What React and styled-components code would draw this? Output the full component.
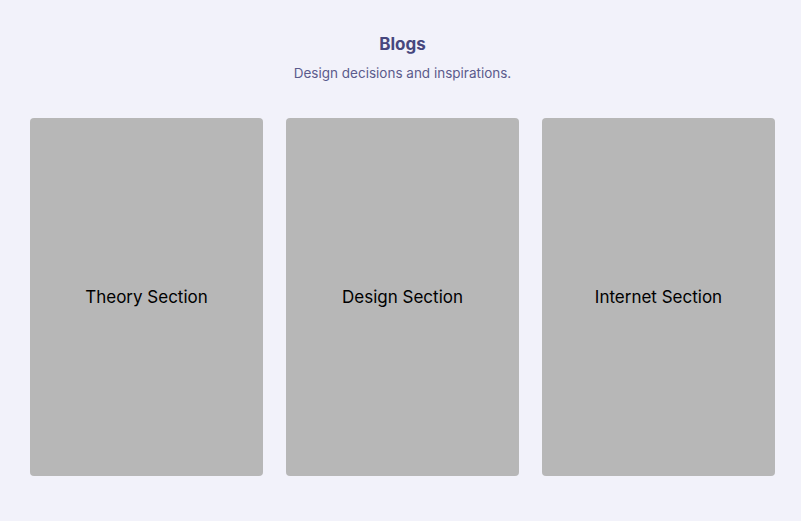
import React from "react";
import styled, { createGlobalStyle } from "styled-components";

const GlobalStyle = createGlobalStyle`
  html, body, #root {
    margin: 0;
    padding: 0;
    box-sizing: border-box;
  }
  body {
    background: #f2f2fa;
    font-family: Inter, "Noto Sans", sans-serif;
  }
`;

const Page = styled.div`
  display: flex;
  flex-direction: column;
  min-height: 521px;
  padding: 34px 26px 0 30px;
  box-sizing: border-box;
`;

const Header = styled.header`
  display: flex;
  flex-direction: column;
  align-items: center;
`;

const Title = styled.h2`
  margin: 0;
  font-size: 17px;
  font-weight: 700;
  line-height: 20px;
  color: #47477e;
`;

const Subtitle = styled.p`
  margin: 10px 0 0;
  font-size: 13.5px;
  line-height: 18px;
  color: #5b5b8c;
`;

const Grid = styled.div`
  display: grid;
  grid-template-columns: repeat(3, 233px);
  gap: 23px;
  margin-top: 36px;
`;

const Card = styled.div`
  height: 358px;
  border-radius: 4px;
  background: #b7b7b7;
  display: flex;
  align-items: center;
  justify-content: center;
  font-size: 17px;
  color: #000;
`;

const sections = ["Theory Section", "Design Section", "Internet Section"];

const App = () => (
  <Page>
    <GlobalStyle />
    <Header>
      <Title>Blogs</Title>
      <Subtitle>Design decisions and inspirations.</Subtitle>
    </Header>
    <Grid>
      {sections.map((s) => (
        <Card key={s}>{s}</Card>
      ))}
    </Grid>
  </Page>
);

export default App;
